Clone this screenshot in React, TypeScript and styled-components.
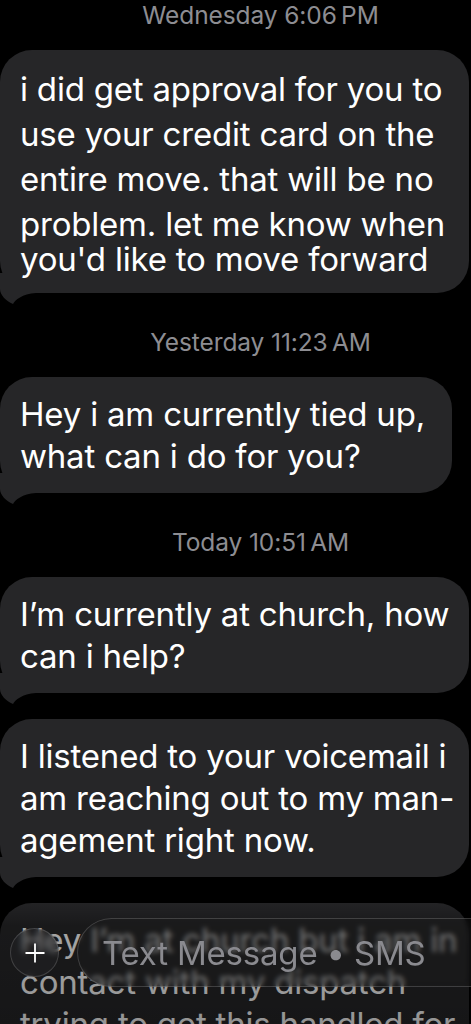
import * as React from 'react'
import styled, { createGlobalStyle } from 'styled-components'

const GlobalStyle = createGlobalStyle`
	html, body {
		margin: 0;
		padding: 0;
		background: #000;
		height: 100%;
		overflow: hidden;
	}
	#root {
		height: 100%;
	}
`

const Screen = styled.div`
	position: relative;
	width: 471px;
	height: 1024px;
	overflow: hidden;
	background: #000;
	font-family: 'Inter', 'Liberation Sans', sans-serif;
	-webkit-font-smoothing: antialiased;
`

const Thread = styled.div`
	display: flex;
	flex-direction: column;
	align-items: flex-start;
	gap: 26px;
`

const Group = styled.section`
	display: flex;
	flex-direction: column;
	align-items: flex-start;
	gap: 20px;
	& + & {
		margin-top: 8px;
	}
`

const Stamp = styled.div`
	align-self: stretch;
	width: 471px;
	text-align: center;
	padding-left: 50px;
	box-sizing: border-box;
	height: 30px;
	line-height: 30px;
	font-size: 24.5px;
	color: #8d8d92;
	letter-spacing: -0.1px;
`

const Bubble = styled.div<{ $width: number; $loose?: boolean }>`
	position: relative;
	box-sizing: border-box;
	width: ${p => p.$width}px;
	padding: ${p => (p.$loose ? '17px 0 21px 20px' : '16px 0 16px 20px')};
	background: #262628;
	border-radius: 32px;
	color: #fff;
	font-size: 33px;
	line-height: ${p => (p.$loose ? 45 : 42)}px;
	letter-spacing: -0.2px;
	white-space: nowrap;
`

const Line = styled.div<{ $tight?: boolean }>`
	position: relative;
	${p => p.$tight && 'line-height: 25px;'}
`

const Tail = styled.svg`
	position: absolute;
	left: 0;
	bottom: -12px;
	width: 40px;
	height: 32px;
`

const BottomShade = styled.div`
	position: absolute;
	left: 0;
	right: 0;
	top: 896px;
	bottom: 0;
	background: linear-gradient(
		to bottom,
		rgba(0, 0, 0, 0) 0px,
		rgba(0, 0, 0, 0.35) 30px,
		rgba(0, 0, 0, 0.42) 100%
	);
	pointer-events: none;
`

const Composer = styled.div`
	position: absolute;
	left: 10px;
	right: -40px;
	top: 918px;
	display: flex;
	align-items: center;
	gap: 18px;
`

const PlusButton = styled.div`
	box-sizing: border-box;
	width: 49px;
	height: 49px;
	border-radius: 50%;
	border: 1px solid rgba(255, 255, 255, 0.16);
	background: rgba(40, 40, 42, 0.35);
	backdrop-filter: blur(3px);
	display: flex;
	align-items: center;
	justify-content: center;
	flex-shrink: 0;
`

const Field = styled.div`
	box-sizing: border-box;
	flex: 1;
	height: 69px;
	border-radius: 35px;
	border: 1px solid rgba(255, 255, 255, 0.17);
	background: rgba(28, 28, 30, 0.35);
	backdrop-filter: blur(2.5px);
	display: flex;
	align-items: center;
	padding-left: 24px;
	font-size: 33px;
	color: #8a8a8f;
	letter-spacing: -0.2px;
`

const Tails = () => (
	<Tail viewBox="0 0 40 32">
		<path
			d="M0 0 L0 16 C0 22 6 28 13 31 C15 27 22 21 36 20 L36 0 Z"
			fill="#262628"
		/>
	</Tail>
)

type Msg = { lines: string[]; width: number; loose?: boolean }

const groups: { stamp: string; bubbles: Msg[] }[] = [
	{
		stamp: 'Wednesday 6:06\u2009PM',
		bubbles: [
			{
				lines: [
					'i did get approval for you to',
					'use your credit card on the',
					'entire move. that will be no',
					'problem. let me know when',
					"you'd like to move forward",
				],
				width: 469,
				loose: true,
			},
		],
	},
	{
		stamp: 'Yesterday 11:23\u2009AM',
		bubbles: [
			{
				lines: ['Hey i am currently tied up,', 'what can i do for you?'],
				width: 452,
			},
		],
	},
	{
		stamp: 'Today 10:51\u2009AM',
		bubbles: [
			{
				lines: ['I\u2019m currently at church, how', 'can i help?'],
				width: 469,
			},
			{
				lines: [
					'I listened to your voicemail i',
					'am reaching out to my man-',
					'agement right now.',
				],
				width: 469,
			},
			{
				lines: [
					'Hey I\u2019m at church but i am in',
					'contact with my dispatch',
					'trying to get this handled for',
				],
				width: 469,
			},
		],
	},
]

export default function App() {
	return (
		<>
			<GlobalStyle />
			<Screen>
				<Thread>
					{groups.map((g, i) => (
						<Group key={i}>
							<Stamp>{g.stamp}</Stamp>
							<Thread>
								{g.bubbles.map((b, j) => (
									<Bubble key={j} $width={b.width} $loose={b.loose}>
										<Tails />
										{b.lines.map((l, k) => (
											<Line key={k} $tight={b.loose && k === b.lines.length - 1}>
												{l}
											</Line>
										))}
									</Bubble>
								))}
							</Thread>
						</Group>
					))}
				</Thread>
				<BottomShade />
				<Composer>
					<PlusButton>
						<svg width="22" height="22" viewBox="0 0 22 22">
							<path d="M11 1.5 V20.5 M1.5 11 H20.5" stroke="#fff" strokeWidth="1.8" />
						</svg>
					</PlusButton>
					<Field>Text Message • SMS</Field>
				</Composer>
			</Screen>
		</>
	)
}
